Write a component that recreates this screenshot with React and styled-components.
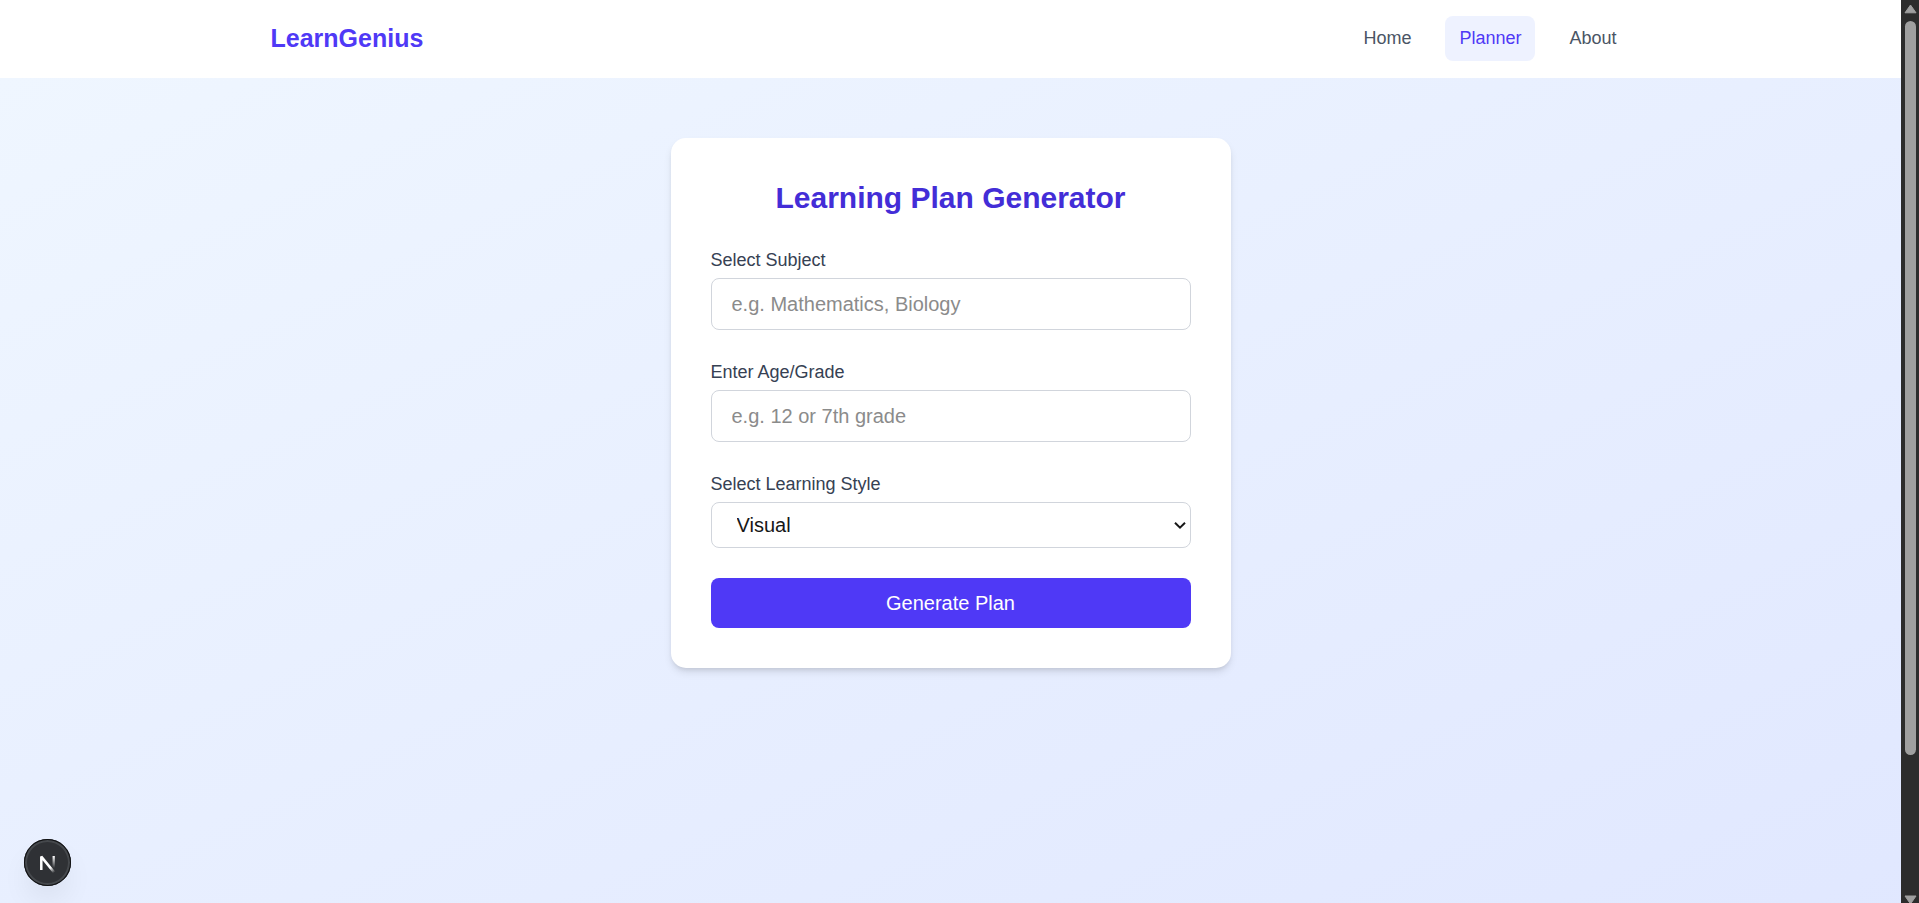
import React from "react";
import styled, { createGlobalStyle } from "styled-components";

const colors = {
  brand: "#4f39f6",
  heading: "#432dd7",
  tint: "#eef2ff",
  text: "#364153",
  muted: "#4a5565",
  border: "#d1d5dc",
};

const GlobalStyle = createGlobalStyle`
  *, *::before, *::after { box-sizing: border-box; }
  body {
    margin: 0;
    font-family: "Liberation Sans", Arial, Helvetica, sans-serif;
    color: #171717;
    background: #ffffff;
  }
`;

const Viewport = styled.div`
  display: grid;
  grid-template-columns: minmax(0, 1fr) 18px;
  height: 100vh;
  overflow: hidden;
`;

const Page = styled.div`
  overflow: hidden;
`;

const Header = styled.header`
  background: #ffffff;
`;

const HeaderInner = styled.div`
  display: flex;
  align-items: center;
  justify-content: space-between;
  max-width: 1440px;
  min-height: 78px;
  margin: 0 auto;
  padding: 0 40px 2px;
`;

const Brand = styled.a`
  color: ${colors.brand};
  font-size: 25px;
  font-weight: 700;
  line-height: 35px;
  text-decoration: none;
`;

const Nav = styled.nav`
  display: flex;
  gap: 20px;
`;

const NavLink = styled.a`
  padding: 10px 14px;
  border-radius: 8px;
  background: ${({ $active }) => ($active ? colors.tint : "transparent")};
  color: ${({ $active }) => ($active ? colors.brand : colors.muted)};
  font-size: 18px;
  line-height: 25px;
  text-decoration: none;
`;

const Main = styled.main`
  display: flex;
  align-items: flex-start;
  justify-content: center;
  min-height: 100vh;
  padding: 60px 20px;
  background: linear-gradient(to bottom right in oklab, #eff6ff, #e0e7ff);
`;

const Card = styled.form`
  display: flex;
  flex-direction: column;
  gap: 30px;
  width: 100%;
  max-width: 560px;
  padding: 40px;
  border-radius: 15px;
  background: #ffffff;
  box-shadow: 0 5px 8px -1px rgba(0, 0, 0, 0.1), 0 3px 5px -2px rgba(0, 0, 0, 0.1);
`;

const Title = styled.h1`
  margin: 0;
  color: ${colors.heading};
  font-size: 30px;
  font-weight: 700;
  line-height: 40px;
  text-align: center;
`;

const Field = styled.div`
  display: flex;
  flex-direction: column;
  gap: 5px;
`;

const Label = styled.label`
  color: ${colors.text};
  font-size: 18px;
  line-height: 25px;
`;

const TextInput = styled.input`
  width: 100%;
  height: 52px;
  padding: 0 20px;
  border: 1px solid ${colors.border};
  border-radius: 8px;
  background: #ffffff;
  color: inherit;
  font: inherit;
  font-size: 20px;
  &::placeholder { color: #8b8b8b; opacity: 1; }
`;

const SelectBox = styled.div`
  position: relative;
`;

const Select = styled.select`
  display: block;
  width: 100%;
  height: 46px;
  padding: 0 25px;
  border: 1px solid ${colors.border};
  border-radius: 8px;
  background: #ffffff;
  color: #171717;
  font: inherit;
  font-size: 20px;
  appearance: none;
`;

const Chevron = styled.svg`
  position: absolute;
  top: 19px;
  right: 5px;
  pointer-events: none;
`;

const SubmitButton = styled.button`
  height: 50px;
  border: 0;
  border-radius: 8px;
  background: ${colors.brand};
  color: #ffffff;
  font: inherit;
  font-size: 20px;
  cursor: pointer;
`;

const DevBadge = styled.button`
  position: fixed;
  bottom: 17px;
  left: 24px;
  width: 47px;
  height: 47px;
  padding: 0;
  border: 0;
  border-radius: 50%;
  background: #2f3135;
  box-shadow: inset 0 0 0 1px #101113, inset 0 0 0 3px #45484c,
    0 16px 32px -8px rgba(0, 0, 0, 0.12);
  svg { display: block; }
`;

const ScrollTrack = styled.div`
  display: flex;
  flex-direction: column;
  align-items: center;
  gap: 7px;
  padding-top: 4px;
  overflow: hidden;
  background: #2c2c2c;
`;

const ScrollThumb = styled.div`
  flex: none;
  width: 11px;
  height: 81.6%;
  border-radius: 6px;
  background: #9f9f9f;
`;

const Arrow = styled.svg`
  flex: none;
  display: block;
  margin-top: ${({ $end }) => ($end ? "auto" : "0")};
`;

const links = [
  { label: "Home" },
  { label: "Planner", active: true },
  { label: "About" },
];

function TextField({ id, label, placeholder }) {
  return (
    <Field>
      <Label htmlFor={id}>{label}</Label>
      <TextInput id={id} type="text" placeholder={placeholder} />
    </Field>
  );
}

export default function App() {
  return (
    <>
      <GlobalStyle />
      <Viewport>
        <Page>
          <Header>
            <HeaderInner>
              <Brand href="#home">LearnGenius</Brand>
              <Nav>
                {links.map(({ label, active }) => (
                  <NavLink key={label} href={"#" + label.toLowerCase()} $active={active}>
                    {label}
                  </NavLink>
                ))}
              </Nav>
            </HeaderInner>
          </Header>
          <Main>
            <Card onSubmit={(event) => event.preventDefault()}>
              <Title>Learning Plan Generator</Title>
              <TextField id="subject" label="Select Subject" placeholder="e.g. Mathematics, Biology" />
              <TextField id="grade" label="Enter Age/Grade" placeholder="e.g. 12 or 7th grade" />
              <Field>
                <Label htmlFor="style">Select Learning Style</Label>
                <SelectBox>
                  <Select id="style" defaultValue="Visual">
                    <option>Visual</option>
                    <option>Auditory</option>
                    <option>Kinesthetic</option>
                  </Select>
                  <Chevron width="12" height="9" viewBox="0 0 12 9" fill="none" aria-hidden="true">
                    <path d="M1 1.7 6 6.7l5-5" stroke="#171717" strokeWidth="2" />
                  </Chevron>
                </SelectBox>
              </Field>
              <SubmitButton type="submit">Generate Plan</SubmitButton>
            </Card>
          </Main>
        </Page>
        <ScrollTrack aria-hidden="true">
          <Arrow width="13" height="10" viewBox="0 0 13 10">
            <path d="M6.5 1 12 8.8H1Z" fill="#9f9f9f" stroke="#9f9f9f" strokeLinejoin="round" />
          </Arrow>
          <ScrollThumb />
          <Arrow $end width="13" height="8" viewBox="0 0 13 8">
            <path d="M1 1h11L6.5 9Z" fill="#9f9f9f" stroke="#9f9f9f" strokeLinejoin="round" />
          </Arrow>
        </ScrollTrack>
      </Viewport>
      <DevBadge type="button" aria-label="Open developer tools">
        <svg width="47" height="47" viewBox="0 0 47 47" fill="none" aria-hidden="true">
          <defs>
            <linearGradient id="diagonal" gradientUnits="userSpaceOnUse" x1="24" y1="23" x2="31" y2="33">
              <stop stopColor="#fff" />
              <stop offset="0.5" stopColor="#fff" />
              <stop offset="1" stopColor="#fff" stopOpacity="0" />
            </linearGradient>
            <linearGradient id="stem" gradientUnits="userSpaceOnUse" x1="30" y1="17" x2="30" y2="29">
              <stop stopColor="#fff" />
              <stop offset="1" stopColor="#fff" stopOpacity="0" />
            </linearGradient>
          </defs>
          <path d="M17.3 31V17.6L30.3 33.6" stroke="url(#diagonal)" strokeWidth="2.5" strokeLinejoin="bevel" />
          <path d="M29.7 17v12" stroke="url(#stem)" strokeWidth="2.3" />
        </svg>
      </DevBadge>
    </>
  );
}
